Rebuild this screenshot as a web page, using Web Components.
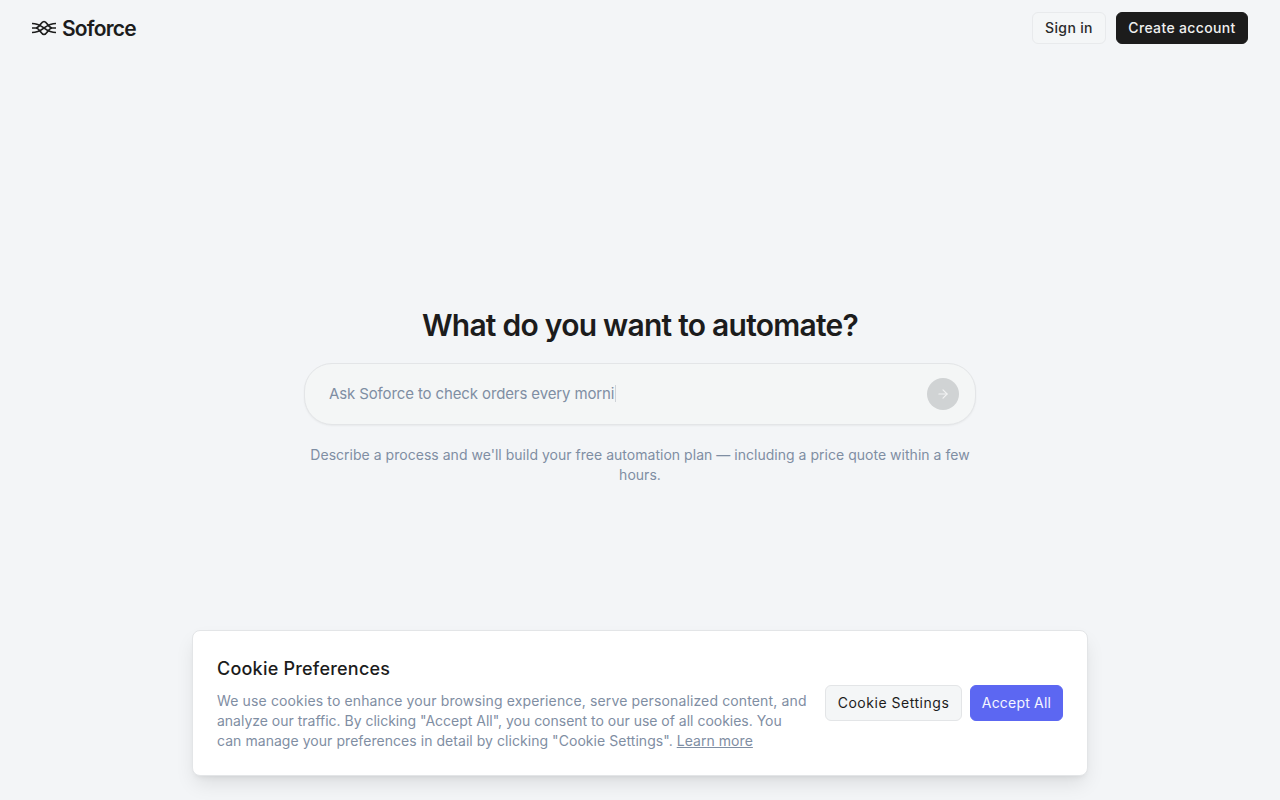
<!DOCTYPE html>
<html lang="en">
<head>
<meta charset="utf-8">
<title>Soforce</title>
<style>
  html, body { margin: 0; height: 100%; }
  body { background: #f3f5f7; font-family: Inter, "Liberation Sans", sans-serif; color: #1c1c1c; }
</style>
</head>
<body>
<site-page>
  <site-header slot="header"></site-header>
  <prompt-hero slot="main"></prompt-hero>
  <cookie-banner slot="footer"></cookie-banner>
</site-page>

<script>
class SitePage extends HTMLElement {
    connectedCallback() {
        let shadowRoot = this.attachShadow({ mode: 'open' });
        shadowRoot.innerHTML = `
            <style>
                :host { display: block; position: relative; height: 800px; overflow: hidden; }
                main { height: 800px; display: flex; align-items: center; justify-content: center; }
                /* header and banner lie over the centred hero */
                .top { position: absolute; top: 0; left: 0; right: 0; }
                .bottom { position: absolute; bottom: 24px; left: 0; right: 0; display: flex; justify-content: center; }
            </style>
            <main><slot name="main"></slot></main>
            <div class="top"><slot name="header"></slot></div>
            <div class="bottom"><slot name="footer"></slot></div>
        `;
    }
}
customElements.define('site-page', SitePage);

class SiteHeader extends HTMLElement {
    connectedCallback() {
        let shadowRoot = this.attachShadow({ mode: 'open' });
        shadowRoot.innerHTML = `
            <style>
                :host { display: flex; align-items: center; justify-content: space-between; height: 56px; padding: 0 32px; }
                .logo { display: flex; align-items: center; gap: 6px; font-size: 21px; font-weight: 600; letter-spacing: -0.8px; color: #1c1c1c; }
                .logo svg { display: block; }
                .actions { display: flex; gap: 10px; }
                button { font: 500 14px Inter, sans-serif; letter-spacing: 0.35px; height: 32px; padding: 0 0 2px; border-radius: 6px; box-sizing: border-box; }
                .ghost { width: 74px; background: #f4f6f7; border: 1px solid #e8eaec; color: #2a2a2a; }
                .dark { width: 132px; background: #1c1c1c; border: 1px solid #1c1c1c; color: #f0f0f0; }
            </style>
            <div class="logo">
                <svg width="24" height="16" viewBox="0 0 24 16" fill="none" stroke="#1c1c1c" stroke-width="1.7">
                    <path d="M0 3.500C6 3.500 8.500 5.500 12 8C15.500 10.500 18 12.500 24 12.500"/>
                    <path d="M0 12.500C6 12.500 8.500 10.500 12 8C15.500 5.500 18 3.500 24 3.500"/>
                    <path d="M0 8H4C7.500 8 9 1.500 12 1.500C15 1.500 16.500 8 20 8H24"/>
                    <path d="M4 8C7.500 8 9 14.500 12 14.500C15 14.500 16.500 8 20 8"/>
                </svg>
                <span>Soforce</span>
            </div>
            <div class="actions">
                <button class="ghost">Sign in</button>
                <button class="dark">Create account</button>
            </div>
        `;
    }
}
customElements.define('site-header', SiteHeader);

class PromptHero extends HTMLElement {
    connectedCallback() {
        let shadowRoot = this.attachShadow({ mode: 'open' });
        shadowRoot.innerHTML = `
            <style>
                :host { display: flex; flex-direction: column; align-items: center; width: 672px; margin-bottom: 9px; }
                h1 { margin: 0 0 20px; font-size: 30px; line-height: 36px; font-weight: 600; letter-spacing: -0.75px; color: #1c1c1c; }
                .box { box-sizing: border-box; width: 100%; height: 62px; display: flex; align-items: center; justify-content: space-between;
                       padding: 0 16px 0 24px; background: #f4f6f6; border: 1px solid #e3e5e7; border-radius: 28px; box-shadow: 0 1px 2px rgba(0,0,0,0.05); }
                .text { font-size: 15px; letter-spacing: -0.12px; color: #7f8ea3; display: flex; align-items: center; }
                .caret { display: inline-block; width: 1px; height: 17px; background: #cfd3d8; margin-left: 1px; }
                .send { width: 32px; height: 32px; border-radius: 50%; background: #d0d3d4; display: flex; align-items: center; justify-content: center; }
                p { margin: 20px 0 0; font-size: 14px; line-height: 20px; letter-spacing: 0.025px; color: #7f8ea3; text-align: center; }
            </style>
            <h1>What do you want to automate?</h1>
            <div class="box">
                <span class="text">Ask Soforce to check orders every morni<i class="caret"></i></span>
                <span class="send">
                    <svg width="14" height="14" viewBox="0 0 24 24" fill="none" stroke="#f2f3f3" stroke-width="2" stroke-linecap="round" stroke-linejoin="round">
                        <path d="M5 12h14"/><path d="m12 5 7 7-7 7"/>
                    </svg>
                </span>
            </div>
            <p>Describe a process and we'll build your free automation plan — including a price quote within a few hours.</p>
        `;
    }
}
customElements.define('prompt-hero', PromptHero);

class CookieBanner extends HTMLElement {
    connectedCallback() {
        let shadowRoot = this.attachShadow({ mode: 'open' });
        shadowRoot.innerHTML = `
            <style>
                :host { box-sizing: border-box; display: flex; align-items: center; justify-content: space-between; width: 896px; padding: 24px; background: #fff;
                        border: 1px solid #e3e5e7; border-radius: 8px; box-shadow: 0 10px 20px -3px rgba(0,0,0,0.1), 0 4px 6px -4px rgba(0,0,0,0.1); }
                h2 { margin: 0 0 8px; font-size: 18px; line-height: 28px; font-weight: 500; letter-spacing: 0.22px; color: #1c1c1c; }
                p { margin: 0; font-size: 14px; line-height: 20px; color: #7f8ea3; }
                .line { display: block; white-space: nowrap; }
                .l1 { letter-spacing: 0.135px; }
                .l2 { letter-spacing: -0.01px; }
                .l3 { letter-spacing: 0.05px; }
                a { color: #7f8ea3; text-decoration: underline; }
                .actions { display: flex; gap: 8px; }
                button { font: 400 14px Inter, sans-serif; height: 36px; padding: 0 0 2px; border-radius: 6px; box-sizing: border-box; }
                .ghost { width: 137px; letter-spacing: 0.52px; background: #f4f6f7; border: 1px solid #e3e5e7; color: #1c1c1c; }
                .primary { width: 93px; letter-spacing: 0.2px; background: #5c67f2; border: 1px solid #5c67f2; color: #f5f6ff; }
            </style>
            <div class="copy">
                <h2>Cookie Preferences</h2>
                <p><span class="line l1">We use cookies to enhance your browsing experience, serve personalized content, and</span>
                <span class="line l2">analyze our traffic. By clicking "Accept All", you consent to our use of all cookies. You</span>
                <span class="line l3">can manage your preferences in detail by clicking "Cookie Settings". <a href="#">Learn more</a></span></p>
            </div>
            <div class="actions">
                <button class="ghost">Cookie Settings</button>
                <button class="primary">Accept All</button>
            </div>
        `;
    }
}
customElements.define('cookie-banner', CookieBanner);
</script>
</body>
</html>
